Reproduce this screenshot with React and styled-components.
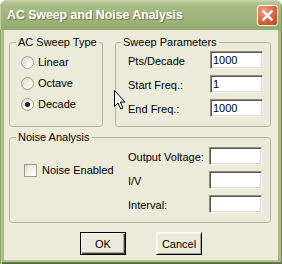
import React from 'react';
import styled, { createGlobalStyle } from 'styled-components';

const Global = createGlobalStyle`
  html, body { margin: 0; padding: 0; background: #ffffff; }
  body {
    width: 282px; height: 264px; overflow: hidden;
    font-family: "Liberation Sans", Arial, sans-serif;
    font-size: 11px; color: #000;
  }
  * { box-sizing: border-box; }
`;

const Window = styled.div`
  position: relative;
  width: 282px;
  height: 264px;
  display: flex;
  flex-direction: column;
  border-radius: 7px 7px 0 0;
  overflow: hidden;
  background: #a3b67f;
`;

const TitleBar = styled.div`
  height: 30px;
  flex: none;
  display: flex;
  align-items: flex-start;
  justify-content: space-between;
  padding: 0 4px 0 7px;
  background: linear-gradient(to bottom, #cfdcb0 0, #b6c793 2px, #a9bc85 6px, #a1b57c 45%, #9bb076 80%, #93a86d 100%);
  box-shadow: inset 1px 0 0 #c2d1a2, inset -1px 0 0 #7f9558;
`;

const Title = styled.span`
  margin-top: 8px;
  font-family: "Liberation Sans", Arial, sans-serif;
  font-weight: bold;
  font-size: 12.3px;
  line-height: 15px;
  color: #ffffff;
  text-shadow: 1px 1px 0 #6b7f4a;
  white-space: nowrap;
`;

const CloseButton = styled.div`
  margin-top: 5px;
  width: 21px;
  height: 21px;
  border: 1px solid #ffffff;
  border-radius: 3px;
  background: radial-gradient(circle at 30% 25%, #eaa184 0, #de7450 40%, #c9502b 80%, #b8411f 100%);
  display: flex;
  align-items: center;
  justify-content: center;
`;

const Frame = styled.div`
  flex: 1;
  display: flex;
  padding: 0 4px 4px 4px;
  background: #a7ba84;
  box-shadow: inset 1px 0 0 #8aa064, inset 2px 0 0 #c0cfa1, inset -1px 0 0 #6f8650,
    inset 0 -1px 0 #566b3c, inset 0 -2px 0 #6c8250;
`;

const Client = styled.div`
  flex: 1;
  display: flex;
  flex-direction: column;
  background: #ecebd9;
  padding: 6px 7px 5px 5px;
  box-shadow: 0 1px 0 #bccb9c;
`;

const Row = styled.div`
  display: flex;
  gap: 12px;
`;

const Group = styled.fieldset`
  margin: 0;
  padding: 0;
  min-width: 0;
  width: ${p => p.$w}px;
  height: ${p => p.$h}px;
  border: 1px solid #b5b4a3;
  border-radius: 3px;
  display: block;
`;

const Legend = styled.legend`
  margin-left: ${p => p.$ml}px;
  padding: 0 2px;
  font-size: 11px;
  line-height: 13px;
`;

const RadioList = styled.div`
  display: flex;
  flex-direction: column;
  gap: 8px;
  padding: 7px 0 0 11px;
`;

const Choice = styled.label`
  display: flex;
  align-items: center;
  gap: ${p => p.$gap}px;
  height: 13px;
  line-height: 13px;
  white-space: nowrap;
`;

const RadioCircle = styled.span`
  width: 13px;
  height: 13px;
  flex: none;
  border-radius: 50%;
  border: 1px solid #a2a18e;
  background: linear-gradient(135deg, #d9d8cb 0, #f3f2ea 55%, #ffffff 100%);
  display: flex;
  align-items: center;
  justify-content: center;
  &::after {
    content: "";
    width: 5px;
    height: 5px;
    border-radius: 50%;
    background: ${p => (p.$checked ? '#1d1d1d' : 'transparent')};
  }
`;

const CheckBox = styled.span`
  width: 13px;
  height: 13px;
  flex: none;
  border: 1px solid #9d9c8a;
  background: linear-gradient(135deg, #dcdbcf 0, #f4f3ec 55%, #ffffff 100%);
`;

const FieldGrid = styled.div`
  display: grid;
  grid-template-columns: ${p => p.$label}px 53px;
  grid-auto-rows: 18px;
  row-gap: 6px;
  align-items: center;
  padding-top: ${p => p.$pt}px;
  padding-left: ${p => p.$pl}px;
`;

const FieldLabel = styled.span`
  white-space: nowrap;
  padding-top: 2px;
`;

const TextBox = styled.div`
  width: 53px;
  height: 18px;
  background: #ffffff;
  border: 1px solid;
  border-color: #8a897c #f4f3ee #f4f3ee #8a897c;
  box-shadow: inset 1px 1px 0 #5a5a52, inset -1px -1px 0 #dedcd0;
  padding: 0 0 0 2px;
  line-height: 16px;
  font-size: 11px;
`;

const NoiseBody = styled.div`
  display: flex;
`;

const NoiseLeft = styled.div`
  width: 118px;
  padding: 20px 0 0 14px;
`;

const ButtonRow = styled.div`
  margin-top: 9px;
  display: flex;
  justify-content: center;
  gap: 30px;
  padding-left: 2px;
`;

const Button = styled.div`
  width: 46px;
  height: 23px;
  display: flex;
  align-items: center;
  justify-content: center;
  font-size: 11px;
  background: #ecebd9;
  border: 1px solid;
  border-color: ${p => (p.$default ? '#000 #000 #000 #000' : '#ffffff #000 #000 #ffffff')};
  box-shadow: ${p =>
    p.$default
      ? 'inset 1px 1px 0 #ffffff, inset -1px -1px 0 #404040, inset -2px -2px 0 #aca899'
      : 'inset 1px 1px 0 #f7f6ee, inset -1px -1px 0 #aca899'};
`;

const Cursor = styled.svg`
  position: absolute;
  left: 113px;
  top: 89px;
`;

export default function App() {
  return (
    <>
      <Global />
      <Window>
        <TitleBar>
          <Title>AC Sweep and Noise Analysis</Title>
          <CloseButton>
            <svg width="13" height="13" viewBox="0 0 13 13">
              <path d="M2.5 2.5 L10.5 10.5 M10.5 2.5 L2.5 10.5" stroke="#ffffff" strokeWidth="2.4" strokeLinecap="square" />
            </svg>
          </CloseButton>
        </TitleBar>
        <Frame>
          <Client>
            <Row>
              <Group $w={94} $h={91}>
                <Legend $ml={6}>AC Sweep Type</Legend>
                <RadioList>
                  <Choice $gap={4}><RadioCircle />Linear</Choice>
                  <Choice $gap={4}><RadioCircle />Octave</Choice>
                  <Choice $gap={4}><RadioCircle $checked />Decade</Choice>
                </RadioList>
              </Group>
              <Group $w={156} $h={91}>
                <Legend $ml={5}>Sweep Parameters</Legend>
                <FieldGrid $label={82} $pt={2} $pl={12}>
                  <FieldLabel>Pts/Decade</FieldLabel>
                  <TextBox>1000</TextBox>
                  <FieldLabel>Start Freq.:</FieldLabel>
                  <TextBox>1</TextBox>
                  <FieldLabel>End Freq.:</FieldLabel>
                  <TextBox>1000</TextBox>
                </FieldGrid>
              </Group>
            </Row>
            <Group $w={262} $h={92} style={{ marginTop: 4 }}>
              <Legend $ml={6}>Noise Analysis</Legend>
              <NoiseBody>
                <NoiseLeft>
                  <Choice $gap={5}><CheckBox />Noise Enabled</Choice>
                </NoiseLeft>
                <FieldGrid $label={81} $pt={3} $pl={0}>
                  <FieldLabel>Output Voltage:</FieldLabel>
                  <TextBox />
                  <FieldLabel>I/V</FieldLabel>
                  <TextBox />
                  <FieldLabel>Interval:</FieldLabel>
                  <TextBox />
                </FieldGrid>
              </NoiseBody>
            </Group>
            <ButtonRow>
              <Button $default>OK</Button>
              <Button>Cancel</Button>
            </ButtonRow>
          </Client>
        </Frame>
        <Cursor width="13" height="21" viewBox="0 0 13 21">
          <path d="M1.5 1.5 V17.5 L5 14 L7.8 20 L10 19 L7.3 13 H12 Z" fill="#ffffff" stroke="#000000" strokeWidth="1" strokeLinejoin="miter" />
        </Cursor>
      </Window>
    </>
  );
}
